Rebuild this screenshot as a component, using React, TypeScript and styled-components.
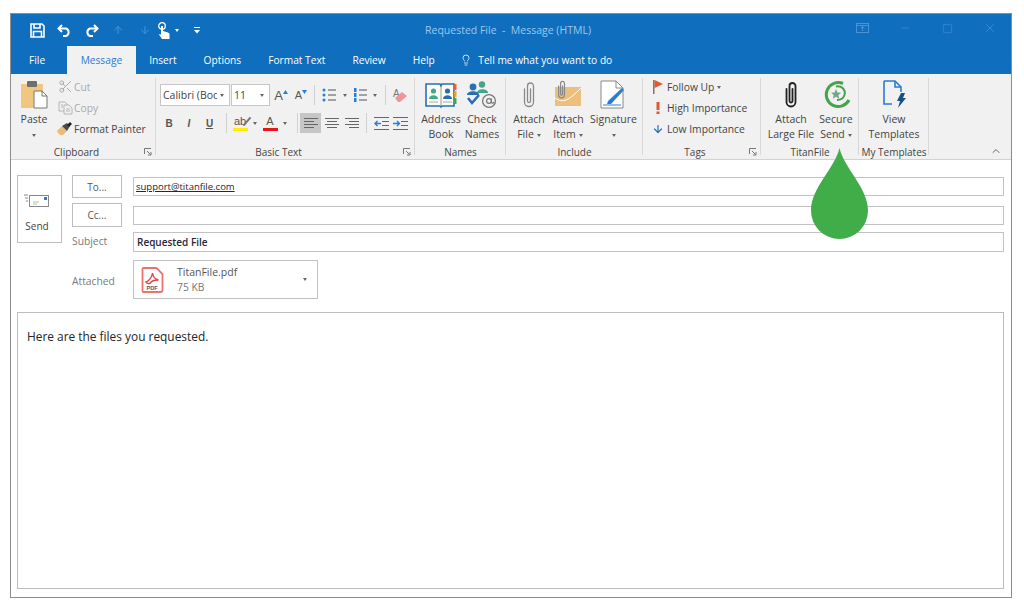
import React from "react";
import styled, { createGlobalStyle } from "styled-components";
import {
  ArrowDown,
  ArrowUp,
  ChevronUp,
  Lightbulb,
  Minus,
  Scissors,
  Square,
  X,
} from "lucide-react";

const GlobalStyle = createGlobalStyle`
  html, body {
    margin: 0;
    padding: 0;
    background: #fff;
  }
  body {
    width: 1024px;
    height: 608px;
    overflow: hidden;
    font-family: "Open Sans", "Noto Sans", sans-serif;
    font-size: 10.5px;
    color: #444;
  }
  svg { display: block; }
`;

const Window = styled.div`
  position: relative;
  box-sizing: border-box;
  width: 1002px;
  height: 585px;
  margin: 13px 0 0 10px;
  border: 1px solid #8c8c8c;
  display: flex;
  flex-direction: column;
`;

const TitleBar = styled.div`
  height: 32px;
  background: #106ebe;
  display: flex;
  align-items: center;
  padding-left: 19px;
`;

const Quick = styled.div<{ $w: number }>`
  width: ${(p) => p.$w}px;
  display: flex;
  align-items: center;
  color: #fff;
`;

const Faded = styled(Quick)`
  color: #4a93d6;
`;

const TinyCaret = styled.span<{ $color?: string; $gap?: number; $top?: number }>`
  display: inline-block;
  flex-shrink: 0;
  width: 0;
  height: 0;
  margin-left: ${(p) => p.$gap ?? 0}px;
  margin-top: ${(p) => p.$top ?? 0}px;
  border-left: 2.5px solid transparent;
  border-right: 2.5px solid transparent;
  border-top: 3px solid ${(p) => p.$color ?? "#666"};
  vertical-align: middle;
`;

const Title = styled.div`
  flex: 1;
  font-size: 10.5px;
  color: #9cc8ee;
  white-space: pre;
  padding-left: 221px;
`;

const Controls = styled.div`
  display: flex;
  align-items: center;
  color: #4a93d6;
  margin-top: -4px;
`;

const ControlCell = styled.div`
  width: 42.5px;
  display: flex;
  justify-content: center;
`;

const TabRow = styled.div`
  height: 28px;
  background: #106ebe;
  display: flex;
  align-items: stretch;
  padding-left: 5px;
`;

const Tab = styled.div<{ $active?: boolean }>`
  display: flex;
  align-items: center;
  padding: 0 13.5px;
  font-size: 10.2px;
  color: ${(p) => (p.$active ? "#2b7cd3" : "#fff")};
  background: ${(p) => (p.$active ? "#f1f1f1" : "transparent")};
`;

const FileTab = styled(Tab)`
  padding: 0 22px 0 13px;
`;

const TellMe = styled.div`
  display: flex;
  align-items: center;
  gap: 6px;
  color: #fff;
  font-size: 10.2px;
  padding-left: 12px;
`;

const Ribbon = styled.div`
  position: relative;
  height: 86px;
  background: #f1f1f1;
  border-bottom: 1px solid #d2d2d2;
  display: flex;
  box-sizing: border-box;
`;

const Group = styled.div<{ $w: number }>`
  position: relative;
  width: ${(p) => p.$w}px;
  box-sizing: border-box;
  display: flex;
  flex-direction: column;
  padding: 4px 0 0;
`;

const GroupBody = styled.div<{ $start?: boolean; $pl?: number; $pr?: number }>`
  flex: 1;
  display: flex;
  min-height: 0;
  justify-content: ${(p) => (p.$start ? "flex-start" : "center")};
  padding-left: ${(p) => p.$pl ?? 0}px;
  padding-right: ${(p) => p.$pr ?? 0}px;
`;

const GroupLabel = styled.div<{ $launcher?: boolean }>`
  height: 13px;
  line-height: 13px;
  text-align: center;
  font-size: 10px;
  color: #444;
  white-space: nowrap;
  padding-right: ${(p) => (p.$launcher ? 14 : 0)}px;
`;

const Divider = styled.span`
  position: absolute;
  right: 0;
  top: 4px;
  bottom: 4px;
  width: 1px;
  background: #d8d8d8;
`;

const Launcher = styled.span`
  position: absolute;
  right: 4px;
  bottom: 3px;
  color: #777;
`;

const Big = styled.div<{ $w: number }>`
  width: ${(p) => p.$w}px;
  display: flex;
  flex-direction: column;
  align-items: center;
  font-size: 10.5px;
  line-height: 15px;
  text-align: center;
  color: #444;
  white-space: nowrap;
`;

const BigIcon = styled.div`
  height: 33px;
  display: flex;
  align-items: center;
  justify-content: center;
  margin-bottom: 1px;
`;

const Stack = styled.div`
  display: flex;
  flex-direction: column;
  margin-top: -2px;
`;

const SmallBtn = styled.div<{ $muted?: boolean }>`
  height: 21px;
  display: flex;
  align-items: center;
  gap: 1px;
  white-space: nowrap;
  font-size: 10.3px;
  color: ${(p) => (p.$muted ? "#aaa" : "#444")};
`;

const SmallIcon = styled.span`
  width: 16px;
  display: flex;
  justify-content: center;
  flex-shrink: 0;
`;

const ToolGrid = styled.div`
  display: flex;
  flex-direction: column;
  width: 100%;
  padding-left: 4px;
  box-sizing: border-box;
`;

const ToolRow = styled.div<{ $mt?: number; $h: number }>`
  display: flex;
  align-items: center;
  height: ${(p) => p.$h}px;
  margin-top: ${(p) => p.$mt ?? 0}px;
`;

const Combo = styled.div<{ $w: number }>`
  box-sizing: border-box;
  width: ${(p) => p.$w}px;
  height: 22px;
  background: #fff;
  border: 1px solid #c6c6c6;
  display: flex;
  align-items: center;
  gap: 3px;
  padding: 0 5px 0 2px;
  font-size: 10.5px;
  margin-right: 1px;
  white-space: nowrap;
`;

const ComboText = styled.span`
  flex: 1;
  min-width: 0;
  overflow: hidden;
`;

const Tool = styled.div<{ $w: number; $on?: boolean; $ml?: number }>`
  width: ${(p) => p.$w}px;
  height: 20px;
  flex-shrink: 0;
  margin-left: ${(p) => p.$ml ?? 0}px;
  display: flex;
  align-items: center;
  justify-content: center;
  background: ${(p) => (p.$on ? "#c6c6c6" : "transparent")};
  color: #555;
`;

const FontLetter = styled.span<{ $italic?: boolean; $under?: boolean; $size?: number; $thin?: boolean }>`
  font-family: "Liberation Sans", sans-serif;
  font-weight: ${(p) => (p.$thin ? 400 : 700)};
  font-size: ${(p) => p.$size ?? 10}px;
  font-style: ${(p) => (p.$italic ? "italic" : "normal")};
  text-decoration: ${(p) => (p.$under ? "underline" : "none")};
  color: #555;
`;

const Caret = styled.svg<{ $mb: number }>`
  margin-bottom: ${(p) => p.$mb}px;
`;

const ToolSep = styled.span<{ $ml: number; $mr: number; $h: number }>`
  width: 1px;
  height: ${(p) => p.$h}px;
  background: #d0d0d0;
  margin: 0 ${(p) => p.$mr}px 0 ${(p) => p.$ml}px;
  flex-shrink: 0;
`;

const ColorLetter = styled.div<{ $bar: string; $mark?: boolean }>`
  position: relative;
  width: 16px;
  display: flex;
  flex-direction: column;
  align-items: center;
  font-family: "Liberation Sans", sans-serif;
  font-size: 11px;
  line-height: 11px;
  color: #555;
  &::before {
    content: "";
    display: ${(p) => (p.$mark ? "block" : "none")};
    position: absolute;
    right: 0;
    top: 0;
    width: 2px;
    height: 11px;
    background: #777;
    transform: rotate(40deg);
  }
  &::after {
    content: "";
    width: 15px;
    height: 3px;
    background: ${(p) => p.$bar};
    margin-top: 1px;
  }
`;

const Collapse = styled.span`
  position: absolute;
  right: 9px;
  bottom: 2px;
  color: #666;
`;

const Compose = styled.div`
  flex: 1;
  display: flex;
  flex-direction: column;
  background: #fff;
  padding: 15px 7px 8px 6px;
  min-height: 0;
`;

const Header = styled.div`
  display: flex;
  align-items: flex-start;
`;

const SendButton = styled.div`
  box-sizing: border-box;
  width: 45px;
  height: 68px;
  border: 1px solid #bdbdbd;
  display: flex;
  flex-direction: column;
  align-items: center;
  padding: 18px 5px 0 0;
  gap: 11px;
  font-size: 10px;
  color: #444;
  margin-right: 10px;
`;

const Fields = styled.div`
  flex: 1;
  display: grid;
  grid-template-columns: 50px 1fr;
  column-gap: 11px;
  grid-template-rows: 23px 24px 20px 42px;
  row-gap: 5px;
  align-items: center;
`;

const HeadBtn = styled.div`
  box-sizing: border-box;
  height: 100%;
  border: 1px solid #bdbdbd;
  display: flex;
  align-items: center;
  justify-content: center;
  font-size: 10px;
  color: #555;
`;

const Field = styled.div<{ $h: number; $bold?: boolean }>`
  box-sizing: border-box;
  height: ${(p) => p.$h}px;
  border: 1px solid #c2c2c2;
  display: flex;
  align-items: center;
  padding-left: ${(p) => (p.$bold ? 3 : 2)}px;
  font-size: ${(p) => (p.$bold ? 10 : 9.5)}px;
  font-weight: ${(p) => (p.$bold ? 600 : 400)};
  color: #262636;
`;

const Recipient = styled.span`
  text-decoration: underline;
`;

const FieldLabel = styled.div<{ $mt: number }>`
  font-size: 10.3px;
  color: #7a7a7a;
  margin-top: ${(p) => p.$mt}px;
`;

const Attachment = styled.div`
  box-sizing: border-box;
  width: 185px;
  height: 39px;
  align-self: end;
  border: 1px solid #c2c2c2;
  display: flex;
  align-items: center;
  padding: 0 10px 0 7px;
  gap: 13px;
`;

const AttachText = styled.div`
  flex: 1;
  font-size: 10.5px;
  line-height: 15px;
  color: #555;
`;

const AttachSize = styled.div`
  color: #777;
  font-size: 10.3px;
`;

const Body = styled.div`
  flex: 1;
  margin: 13px 0 0 0;
  border: 1px solid #bdbdbd;
  padding: 15px 9px;
  font-size: 11.9px;
  line-height: 16px;
  color: #262626;
`;

const Drop = styled.svg`
  position: absolute;
  left: 800px;
  top: 134px;
`;

const FloppyIcon = () => (
  <svg width="15" height="15" viewBox="0 0 15 15" fill="none" stroke="#fff" strokeWidth="1.6">
    <path d="M1 1h11l2 2v11H1z" />
    <path d="M4 1v4h6V1M3.500 14V8.500h8V14" />
  </svg>
);

const UndoIcon = ({ flip }: { flip?: boolean }) => (
  <svg width="15" height="13" viewBox="0 0 15 13" fill="none" stroke="#fff" strokeWidth="2">
    <g transform={flip ? "translate(15 0) scale(-1 1)" : undefined}>
      <path d="M5 1L1.500 4.500 5 8" />
      <path d="M2 4.500h7a4 4 0 0 1 0 7.500H6" />
    </g>
  </svg>
);

const TouchIcon = () => (
  <svg width="13" height="17" viewBox="0 0 13 17">
    <circle cx="5" cy="4" r="3.300" fill="none" stroke="#fff" strokeWidth="1.300" />
    <path d="M4 4h2v5l5 1.500c1 .5 1.500 1 1.500 2V17H5L2 12.500l1-.5 1 1z" fill="#fff" />
  </svg>
);

const PasteIcon = () => (
  <svg width="27" height="28" viewBox="0 0 27 28">
    <rect x="0" y="3" width="22" height="24" rx="1" fill="#f0c77e" />
    <rect x="6" y="0" width="10" height="6" rx="1" fill="#6f6f6f" />
    <path d="M13 10h8l5 5v12H13z" fill="#fff" stroke="#777" />
    <path d="M21 10v5h5" fill="none" stroke="#777" />
  </svg>
);

const CopyIcon = () => (
  <svg width="15" height="14" viewBox="0 0 15 14" fill="none" stroke="#b5b5b5">
    <path d="M1 1h6l2 2v7H1z" />
    <path d="M6 4h5l3 3v6H6z" fill="#f1f1f1" />
    <path d="M8 8h4M8 10h4M3 4h2M3 6h2" />
  </svg>
);

const BrushIcon = () => (
  <svg width="16" height="14" viewBox="0 0 16 14">
    <path d="M0 9l5-5 5 5-4 4c-2 1-4 0-6-4z" fill="#e9bd74" />
    <path d="M5 4l5-3 3 3-3 5z" fill="#4a4a4a" />
    <path d="M10 3l3-3 2 2-3 3z" fill="#222" />
  </svg>
);

const LauncherIcon = () => (
  <svg width="8" height="8" viewBox="0 0 8 8" fill="none" stroke="currentColor">
    <path d="M0.5 6V0.5H7" />
    <path d="M3 3l3.500 3.500M7 4v3H4" />
  </svg>
);

const Bullets = ({ numbered }: { numbered?: boolean }) => (
  <svg width="14" height="14" viewBox="0 0 14 14">
    {[2, 7, 12].map((y) => (
      <React.Fragment key={y}>
        {numbered ? (
          <rect x="1" y={y - 2} width="2.500" height="4" fill="#2b7cd3" />
        ) : (
          <circle cx="2" cy={y} r="1.500" fill="#2b7cd3" />
        )}
        <rect x="6" y={y - 0.5} width="8" height="1" fill="#555" />
      </React.Fragment>
    ))}
  </svg>
);

const AlignIcon = ({ kind }: { kind: "left" | "center" | "right" }) => {
  const lines = [14, 10, 14, 10];
  return (
    <svg width="14" height="11" viewBox="0 0 14 11" fill="#666">
      {lines.map((w, i) => (
        <rect
          key={i}
          x={kind === "left" ? 0 : kind === "center" ? (14 - w) / 2 : 14 - w}
          y={i * 3}
          width={w}
          height="1"
        />
      ))}
    </svg>
  );
};

const IndentIcon = ({ flip }: { flip?: boolean }) => (
  <svg width="15" height="13" viewBox="0 0 15 13">
    <g fill="#666">
      <rect x="0" y="0" width="15" height="1" />
      <rect x="8" y="4" width="7" height="1" />
      <rect x="8" y="8" width="7" height="1" />
      <rect x="0" y="12" width="15" height="1" />
    </g>
    {flip ? (
      <path d="M0 6.500h6M4 4l2.500 2.500L4 9" fill="none" stroke="#2b7cd3" strokeWidth="1.400" />
    ) : (
      <path d="M7 6.500H1M3.500 4L1 6.500 3.500 9" fill="none" stroke="#2b7cd3" strokeWidth="1.400" />
    )}
  </svg>
);

const EraserIcon = () => (
  <svg width="16" height="15" viewBox="0 0 16 15">
    <text x="1" y="9" fontSize="10" fontFamily="Liberation Sans, sans-serif" fill="#777">
      A
    </text>
    <path d="M3 10l7-6 5 4-7 6H6z" fill="#f0939d" />
  </svg>
);

const GrowFont = ({ up }: { up?: boolean }) => (
  <Tool $w={20}>
    <FontLetter $size={up ? 13 : 11} $thin>
      A
    </FontLetter>
    <Caret $mb={7} width="5" height="4" viewBox="0 0 5 4">
      <path d={up ? "M0 4L2.500 0 5 4z" : "M0 0h5L2.500 4z"} fill="#2b7cd3" />
    </Caret>
  </Tool>
);

const AddressBookIcon = () => (
  <svg width="32" height="26" viewBox="0 0 32 26">
    <path d="M1 2h14l1 2 1-2h12v22H17l-1 1-1-1H1z" fill="#fbfbf4" stroke="#2b6fb3" strokeWidth="1.600" />
    <path d="M16 4v20" stroke="#9a9a9a" />
    <rect x="29" y="2" width="2.500" height="6" fill="#e0653a" />
    <rect x="29" y="9" width="2.500" height="6" fill="#e0a13a" />
    <rect x="29" y="16" width="2.500" height="6" fill="#3fa45a" />
    <circle cx="8.500" cy="9" r="2.600" fill="#3fa98c" />
    <path d="M4 17c0-5 9-5 9 0z" fill="#3fa98c" />
    <circle cx="22.500" cy="9" r="2.600" fill="#2b6fb3" />
    <path d="M18 17c0-5 9-5 9 0z" fill="#2b6fb3" />
    <path d="M4 20h9M18 20h9" stroke="#aaa" />
  </svg>
);

const CheckNamesIcon = () => (
  <svg width="30" height="28" viewBox="0 0 30 28">
    <circle cx="6" cy="6" r="3.400" fill="#2b6fb3" />
    <circle cx="15" cy="3.500" r="3.200" fill="#45a58a" />
    <path d="M10 12c0-5 11-5 11 0z" fill="#45a58a" />
    <path d="M0 14c0-5 12-5 12 0z" fill="#2b6fb3" />
    <path d="M1 17l4 5 7-8" fill="none" stroke="#2b6fb3" strokeWidth="2.600" />
    <circle cx="22" cy="20" r="6.400" fill="#f1f1f1" stroke="#777" strokeWidth="1.300" />
    <circle cx="22" cy="20" r="2.400" fill="none" stroke="#777" strokeWidth="1.200" />
    <path d="M24.400 17.500v3.500c0 1.500 2 1.500 2.600 0" fill="none" stroke="#777" strokeWidth="1.200" />
  </svg>
);

const ClipIcon = ({ color, width }: { color: string; width: number }) => (
  <svg width="14" height="28" viewBox="0 0 14 28" fill="none" stroke={color} strokeWidth={width} strokeLinecap="round">
    <path d="M2.500 8v13a4.500 4.500 0 0 0 9 0V5a3 3 0 0 0-6 0v15a1.500 1.500 0 0 0 3 0V8" />
  </svg>
);

const AttachItemIcon = () => (
  <svg width="28" height="29" viewBox="0 0 28 29">
    <rect x="1" y="7" width="26" height="19" fill="#ecc07c" />
    <path d="M1 18c8 6 14 2 26-10" fill="none" stroke="#fff" strokeWidth="1" />
    <g transform="translate(3 0) scale(.65 .7)" fill="none" stroke="#888" strokeWidth="1.800">
      <path d="M2.500 8v13a4.500 4.500 0 0 0 9 0V5a3 3 0 0 0-6 0v15a1.500 1.500 0 0 0 3 0V8" />
    </g>
  </svg>
);

const SignatureIcon = () => (
  <svg width="27" height="29" viewBox="0 0 27 29">
    <path d="M1 1h15l7 7v20H1z" fill="#fff" stroke="#888" />
    <path d="M16 1v7h7" fill="none" stroke="#888" />
    <path d="M8 21L22 8l2 2L11 24H7z" fill="#2b7cd3" />
    <path d="M3 25h18" stroke="#2b7cd3" />
  </svg>
);

const TitanLogo = () => (
  <svg width="29" height="29" viewBox="0 0 29 29" fill="none" stroke="#45a349">
    <path d="M21 3.500A12 12 0 1 0 27 20" strokeWidth="3" />
    <path d="M14 6.500c6-1 10 3.500 8.500 8.500-1 3-4 5-7.500 5" strokeWidth="2" />
    <path
      d="M14 9l1.500 3.400 3.700.3-2.800 2.400.9 3.600-3.300-1.900-3.200 1.900.9-3.600-2.800-2.400 3.700-.3z"
      fill="#6fa887"
      stroke="none"
    />
  </svg>
);

const TemplateIcon = () => (
  <svg width="25" height="29" viewBox="0 0 25 29">
    <path d="M2 1h11l6 6v5M2 1v23h8" fill="none" stroke="#2b7cd3" strokeWidth="1.600" />
    <path d="M13 1v6h6" fill="none" stroke="#2b7cd3" strokeWidth="1.600" />
    <path d="M19 13h4l-2 5h3l-8 10 2-7h-3z" fill="#1d4f87" />
  </svg>
);

const SendIcon = () => (
  <svg width="26" height="14" viewBox="0 0 26 14" fill="none">
    <rect x="5.500" y="1.500" width="19" height="11" fill="#fff" stroke="#888" />
    <rect x="20" y="3" width="3" height="3" fill="#2b7cd3" />
    <path d="M9 8h6M9 10h4" stroke="#bbb" />
    <path d="M0 1h4M1 4h3M2 7h2" stroke="#888" />
  </svg>
);

const PdfIcon = () => (
  <svg width="23" height="26" viewBox="0 0 23 26" fill="none">
    <path d="M2.500 1h13l6 6v16a2 2 0 0 1-2 2h-17a1 1 0 0 1-1-1V2a1 1 0 0 1 1-1z" fill="#fff" stroke="#f07070" strokeWidth="1.800" />
    <path
      d="M5 15c3-1 6-5 6.500-9 .5 4 2 6 6 7-4 0-7 .5-8 3-1 1-3 1-4.500-1z"
      fill="none"
      stroke="#e04646"
      strokeWidth="1.400"
    />
    <text x="5.500" y="22.500" fontSize="5.500" fontWeight="700" fontFamily="Liberation Sans, sans-serif" fill="#555">
      PDF
    </text>
  </svg>
);

const RestoreIcon = () => (
  <svg width="13" height="10" viewBox="0 0 13 10" fill="none" stroke="currentColor">
    <rect x="0.500" y="0.500" width="12" height="9" />
    <path d="M0.500 2.500h12M6.500 8V4M4.500 5.500l2-2 2 2" />
  </svg>
);

export default function App() {
  return (
    <>
      <GlobalStyle />
      <Window>
        <TitleBar>
          <Quick $w={27}>
            <FloppyIcon />
          </Quick>
          <Quick $w={27}>
            <UndoIcon />
          </Quick>
          <Quick $w={28}>
            <UndoIcon flip />
          </Quick>
          <Faded $w={27}>
            <ArrowUp size={12} strokeWidth={2} />
          </Faded>
          <Faded $w={18}>
            <ArrowDown size={12} strokeWidth={2} />
          </Faded>
          <Quick $w={37}>
            <TouchIcon />
            <TinyCaret $color="#fff" $gap={5} />
          </Quick>
          <Quick $w={10}>
            <svg width="6" height="7" viewBox="0 0 6 7" fill="#fff">
              <rect x="0" y="0" width="6" height="1" />
              <path d="M0 3h6L3 6.500z" />
            </svg>
          </Quick>
          <Title>{"Requested File  -  Message (HTML)"}</Title>
          <Controls>
            <ControlCell>
              <RestoreIcon />
            </ControlCell>
            <ControlCell>
              <Minus size={12} strokeWidth={1.2} />
            </ControlCell>
            <ControlCell>
              <Square size={11} strokeWidth={1.2} />
            </ControlCell>
            <ControlCell>
              <X size={14} strokeWidth={1.2} />
            </ControlCell>
          </Controls>
        </TitleBar>
        <TabRow>
          <FileTab>File</FileTab>
          <Tab $active>Message</Tab>
          <Tab>Insert</Tab>
          <Tab>Options</Tab>
          <Tab>Format Text</Tab>
          <Tab>Review</Tab>
          <Tab>Help</Tab>
          <TellMe>
            <Lightbulb size={12} strokeWidth={1.5} />
            Tell me what you want to do
          </TellMe>
        </TabRow>
        <Ribbon>
          <Group $w={145}>
            <GroupBody $start>
              <Big $w={46}>
                <BigIcon>
                  <PasteIcon />
                </BigIcon>
                Paste
                <TinyCaret $top={7} />
              </Big>
              <Stack>
                <SmallBtn $muted>
                  <SmallIcon>
                    <Scissors size={15} strokeWidth={1.6} />
                  </SmallIcon>
                  Cut
                </SmallBtn>
                <SmallBtn $muted>
                  <SmallIcon>
                    <CopyIcon />
                  </SmallIcon>
                  Copy
                </SmallBtn>
                <SmallBtn>
                  <SmallIcon>
                    <BrushIcon />
                  </SmallIcon>
                  Format Painter
                </SmallBtn>
              </Stack>
            </GroupBody>
            <GroupLabel $launcher>Clipboard</GroupLabel>
            <Launcher>
              <LauncherIcon />
            </Launcher>
            <Divider />
          </Group>
          <Group $w={259}>
            <GroupBody>
              <ToolGrid>
                <ToolRow $h={22} $mt={6}>
                  <Combo $w={70}>
                    <ComboText>Calibri (Body)</ComboText>
                    <TinyCaret />
                  </Combo>
                  <Combo $w={39}>
                    <ComboText>11</ComboText>
                    <TinyCaret />
                  </Combo>
                  <GrowFont up />
                  <GrowFont />
                  <ToolSep $ml={3} $mr={6} $h={20} />
                  <Tool $w={16}>
                    <Bullets />
                  </Tool>
                  <Tool $w={15}>
                    <TinyCaret />
                  </Tool>
                  <Tool $w={16}>
                    <Bullets numbered />
                  </Tool>
                  <Tool $w={14}>
                    <TinyCaret />
                  </Tool>
                  <ToolSep $ml={3} $mr={5} $h={20} />
                  <Tool $w={17}>
                    <EraserIcon />
                  </Tool>
                </ToolRow>
                <ToolRow $h={20} $mt={7}>
                  <Tool $w={20} $ml={-1}>
                    <FontLetter>B</FontLetter>
                  </Tool>
                  <Tool $w={20}>
                    <FontLetter $italic>I</FontLetter>
                  </Tool>
                  <Tool $w={21}>
                    <FontLetter $under>U</FontLetter>
                  </Tool>
                  <ToolSep $ml={6} $mr={5} $h={20} />
                  <ColorLetter $bar="#ffee00" $mark>
                    ab
                  </ColorLetter>
                  <Tool $w={14}>
                    <TinyCaret />
                  </Tool>
                  <ColorLetter $bar="#e8141c">A</ColorLetter>
                  <Tool $w={14}>
                    <TinyCaret />
                  </Tool>
                  <ToolSep $ml={5} $mr={2} $h={20} />
                  <Tool $w={21} $on>
                    <AlignIcon kind="left" />
                  </Tool>
                  <Tool $w={21}>
                    <AlignIcon kind="center" />
                  </Tool>
                  <Tool $w={20}>
                    <AlignIcon kind="right" />
                  </Tool>
                  <ToolSep $ml={4} $mr={5} $h={20} />
                  <Tool $w={18}>
                    <IndentIcon />
                  </Tool>
                  <Tool $w={20}>
                    <IndentIcon flip />
                  </Tool>
                </ToolRow>
              </ToolGrid>
            </GroupBody>
            <GroupLabel $launcher>Basic Text</GroupLabel>
            <Launcher>
              <LauncherIcon />
            </Launcher>
            <Divider />
          </Group>
          <Group $w={91}>
            <GroupBody $pr={3}>
              <Big $w={46}>
                <BigIcon>
                  <AddressBookIcon />
                </BigIcon>
                Address
                <br />
                Book
              </Big>
              <Big $w={36}>
                <BigIcon>
                  <CheckNamesIcon />
                </BigIcon>
                Check
                <br />
                Names
              </Big>
            </GroupBody>
            <GroupLabel>Names</GroupLabel>
            <Divider />
          </Group>
          <Group $w={137}>
            <GroupBody>
              <Big $w={39}>
                <BigIcon>
                  <ClipIcon color="#8a8a8a" width={1.3} />
                </BigIcon>
                Attach
                <span>
                  File
                  <TinyCaret $gap={3} />
                </span>
              </Big>
              <Big $w={39}>
                <BigIcon>
                  <AttachItemIcon />
                </BigIcon>
                Attach
                <span>
                  Item
                  <TinyCaret $gap={3} />
                </span>
              </Big>
              <Big $w={52}>
                <BigIcon>
                  <SignatureIcon />
                </BigIcon>
                Signature
                <TinyCaret $top={7} />
              </Big>
            </GroupBody>
            <GroupLabel>Include</GroupLabel>
            <Divider />
          </Group>
          <Group $w={118}>
            <GroupBody $start $pl={7}>
              <Stack>
                <SmallBtn>
                  <SmallIcon>
                    <svg width="12" height="14" viewBox="0 0 12 14">
                      <rect x="1" y="0" width="1.500" height="14" fill="#777" />
                      <path d="M2.500 0L11 4 2.500 8z" fill="#e4572e" />
                    </svg>
                  </SmallIcon>
                  <span>
                    Follow Up
                    <TinyCaret $gap={3} />
                  </span>
                </SmallBtn>
                <SmallBtn>
                  <SmallIcon>
                    <svg width="4" height="12" viewBox="0 0 4 12" fill="#e4572e">
                      <rect x="0.500" y="0" width="3" height="8" />
                      <rect x="0.500" y="9.500" width="3" height="2.500" />
                    </svg>
                  </SmallIcon>
                  High Importance
                </SmallBtn>
                <SmallBtn>
                  <SmallIcon>
                    <ArrowDown size={12} strokeWidth={2.4} color="#2b6fb3" />
                  </SmallIcon>
                  Low Importance
                </SmallBtn>
              </Stack>
            </GroupBody>
            <GroupLabel $launcher>Tags</GroupLabel>
            <Launcher>
              <LauncherIcon />
            </Launcher>
            <Divider />
          </Group>
          <Group $w={98}>
            <GroupBody>
              <Big $w={52}>
                <BigIcon>
                  <ClipIcon color="#222" width={1.8} />
                </BigIcon>
                Attach
                <br />
                Large File
              </Big>
              <Big $w={38}>
                <BigIcon>
                  <TitanLogo />
                </BigIcon>
                Secure
                <span>
                  Send
                  <TinyCaret $gap={3} />
                </span>
              </Big>
            </GroupBody>
            <GroupLabel>TitanFile</GroupLabel>
            <Divider />
          </Group>
          <Group $w={70}>
            <GroupBody>
              <Big $w={56}>
                <BigIcon>
                  <TemplateIcon />
                </BigIcon>
                View
                <br />
                Templates
              </Big>
            </GroupBody>
            <GroupLabel>My Templates</GroupLabel>
            <Divider />
          </Group>
          <Collapse>
            <ChevronUp size={12} strokeWidth={2} />
          </Collapse>
        </Ribbon>
        <Compose>
          <Header>
            <SendButton>
              <SendIcon />
              Send
            </SendButton>
            <Fields>
              <HeadBtn>To...</HeadBtn>
              <Field $h={19}>
                <Recipient>support@titanfile.com</Recipient>
              </Field>
              <HeadBtn>Cc...</HeadBtn>
              <Field $h={19} />
              <FieldLabel $mt={-2}>Subject</FieldLabel>
              <Field $h={20} $bold>
                Requested File
              </Field>
              <FieldLabel $mt={5}>Attached</FieldLabel>
              <Attachment>
                <PdfIcon />
                <AttachText>
                  TitanFile.pdf
                  <AttachSize>75 KB</AttachSize>
                </AttachText>
                <TinyCaret />
              </Attachment>
            </Fields>
          </Header>
          <Body>Here are the files you requested.</Body>
        </Compose>
        <Drop width="57" height="91" viewBox="0 0 57 91">
          <path d="M28.500 0C33 20 57 40 57 62.500a28.500 28.500 0 0 1-57 0C0 40 24 20 28.500 0z" fill="#41ad49" />
        </Drop>
      </Window>
    </>
  );
}
